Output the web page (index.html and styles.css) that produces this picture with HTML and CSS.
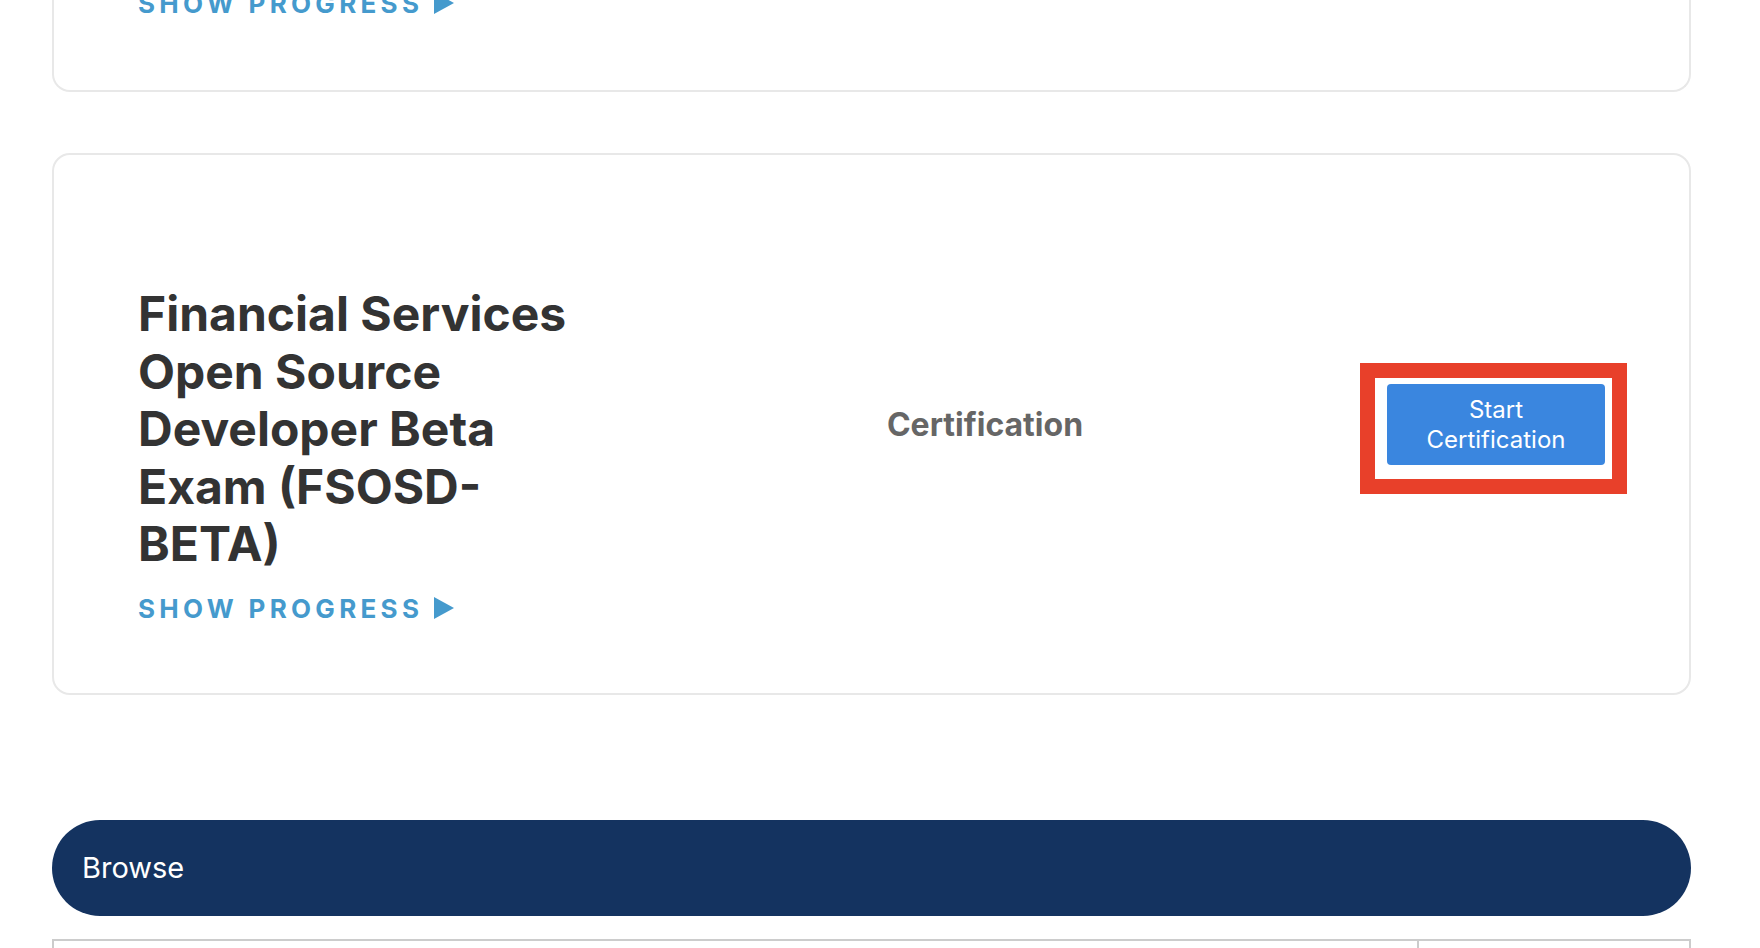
FILE: index.html
```html
<!DOCTYPE html>
<html lang="en">
<head>
<meta charset="utf-8">
<title>Certifications</title>
<link rel="stylesheet" href="styles.css">
</head>
<body>
<main class="page">
  <section class="card card-cut">
    <a class="progress-link" href="#">SHOW PROGRESS<span class="tri"></span></a>
  </section>

  <section class="card">
    <div class="card-row">
      <h2 class="exam-title">Financial Services Open Source Developer Beta Exam (FSOSD-BETA)</h2>
      <div class="exam-type">Certification</div>
      <div class="btn-wrap">
        <button class="start-btn" type="button">Start Certification</button>
        <span class="highlight"></span>
      </div>
    </div>
    <a class="progress-link" href="#">SHOW PROGRESS<span class="tri"></span></a>
  </section>

  <div class="browse-bar">Browse</div>

  <div class="browse-table">
    <div class="cell cell-main"></div>
    <div class="cell cell-side"></div>
  </div>
</main>
</body>
</html>
```

FILE: styles.css
```css
* { box-sizing: border-box; }

html, body {
  margin: 0;
  padding: 0;
  background: #ffffff;
  font-family: Inter, "Noto Sans", "Liberation Sans", sans-serif;
}

.page {
  margin-left: 52px;
  width: 1639px;
  padding-bottom: 40px;
}

.card {
  border: 2px solid #e8e8e8;
  border-radius: 18px;
  padding: 122px 84px 69px 84px;
  margin-bottom: 125px;
}

.card-cut {
  border-top: none;
  border-radius: 0 0 18px 18px;
  padding-top: 0;
  padding-bottom: 71px;
  margin-bottom: 61px;
}

.card-cut .progress-link {
  margin-top: -12px;
}

.card-row {
  display: flex;
  justify-content: space-between;
  align-items: center;
}

.exam-title {
  flex: 0 0 445px;
  margin: 8px 0 0 0;
  font-size: 48px;
  line-height: 57.6px;
  font-weight: 700;
  color: #333333;
}

.exam-type {
  font-size: 32px;
  font-weight: 700;
  color: #666666;
}

.btn-wrap {
  position: relative;
}

.start-btn {
  display: block;
  width: 218px;
  height: 81px;
  padding: 0 12px;
  border: none;
  border-radius: 4px;
  background: #3a86df;
  color: #ffffff;
  font-family: Inter, "Noto Sans", "Liberation Sans", sans-serif;
  font-size: 24px;
  line-height: 30px;
  text-align: center;
  cursor: pointer;
}

.highlight {
  position: absolute;
  left: -27px;
  top: -21px;
  width: 267px;
  height: 131px;
  border: 15px solid #e8402a;
  pointer-events: none;
}

.progress-link {
  display: block;
  margin-top: 20px;
  font-size: 26px;
  font-weight: 700;
  letter-spacing: 4.3px;
  color: #459acd;
  text-decoration: none;
}

.tri {
  display: inline-block;
  width: 0;
  height: 0;
  margin-left: 11px;
  border-left: 20px solid #459acd;
  border-top: 11.5px solid transparent;
  border-bottom: 11.5px solid transparent;
  vertical-align: -1px;
}

.browse-bar {
  display: flex;
  align-items: center;
  height: 96px;
  padding-left: 30px;
  border-radius: 48px;
  background: #143360;
  color: #ffffff;
  font-size: 29px;
}

.browse-table {
  display: grid;
  grid-template-columns: 1fr 270px;
  margin-top: 23px;
  border: 2px solid #cccccc;
  border-bottom: none;
  height: 120px;
}

.cell-main {
  border-right: 2px solid #cccccc;
}
```
